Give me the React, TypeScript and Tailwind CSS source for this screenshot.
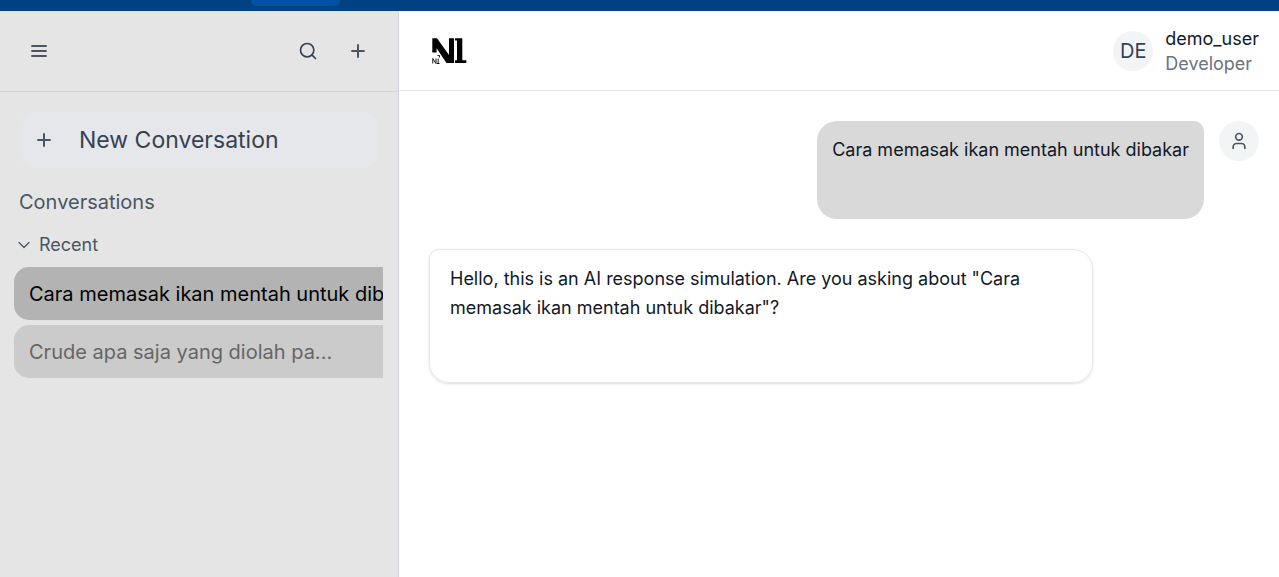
import React from 'react';
import { ChevronDown, Search, User } from 'lucide-react';

function LineIcon({ d }: { d: string }) {
  return (
    <svg viewBox="0 0 20 20" className="size-5" fill="none" stroke="currentColor" strokeWidth={2} aria-hidden="true">
      <path d={d} />
    </svg>
  );
}

const menuPath = 'M2.300 5h15.400M2.300 10h15.400M2.300 15h15.400';
const plusPath = 'M3.300 10h13.400M10 3.300v13.400';

function Logo() {
  return (
    <svg viewBox="0 0 40 34" className="h-[34px] w-10" role="img" aria-label="NI">
      <path fill="#000" d="M2.300 4.200H7L19 21V4.200h5V29h-7.500L6.600 14.200V18.500H2.300z" />
      <path fill="#000" d="M25 4.200h7.300v22h4V29H25v-2.800h2V6.500h-2z" />
      <path fill="none" stroke="#000" strokeWidth="0.900" d="M2.800 29.500v-5l3.200 5v-5M6.800 29.500h2.800M8.200 29.500v-5M7.500 21.500h2v2" />
    </svg>
  );
}

const conversations = [
  { title: 'Cara memasak ikan mentah untuk dibakar', active: true },
  { title: 'Crude apa saja yang diolah pa...', active: false },
];

function Sidebar() {
  return (
    <aside className="flex w-[399px] shrink-0 flex-col border-r border-[#d1d5db] bg-[#e5e5e5] text-[#374151]">
      <div className="flex h-[81px] items-center justify-between border-b border-[#d1d5db] pr-5 pl-[19px]">
        <button aria-label="Toggle menu" className="flex size-10 items-center justify-center text-[#4b5563]">
          <LineIcon d={menuPath} />
        </button>
        <div className="flex gap-[10px]">
          <button aria-label="Search" className="flex size-10 items-center justify-center">
            <Search size={20} />
          </button>
          <button aria-label="Add conversation" className="flex size-10 items-center justify-center text-[#4b5563]">
            <LineIcon d={plusPath} />
          </button>
        </div>
      </div>
      <div className="px-5 pt-5">
        <button className="flex h-14 w-full items-center gap-[25px] rounded-[15px] bg-[#e5e7eb] pl-[14px] text-[23px]">
          <span className="text-[#4b5563]">
            <LineIcon d={plusPath} />
          </span>
          New Conversation
        </button>
      </div>
      <h2 className="mt-[18px] px-[19px] text-[20px] leading-8 text-[#4b5563]">Conversations</h2>
      <button className="mt-[13px] flex items-center gap-[5px] px-[14px] text-left text-[18px] leading-7 text-[#4b5563]">
        <ChevronDown size={20} strokeWidth={1.5} />
        Recent
      </button>
      <ul className="mt-2 mr-[15px] ml-[14px] flex flex-col gap-[5px]">
        {conversations.map((item) => (
          <li key={item.title}>
            <button
              className={
                item.active
                  ? 'block h-[53px] w-full overflow-hidden rounded-l-[15px] bg-[#b3b3b3] pl-[15px] text-left text-[20px] whitespace-nowrap text-black'
                  : 'block h-[53px] w-full overflow-hidden rounded-l-[15px] bg-[#cbcbcb] pl-[15px] text-left text-[20px] whitespace-nowrap text-[#666666]'
              }
            >
              {item.title}
            </button>
          </li>
        ))}
      </ul>
    </aside>
  );
}

export default function App() {
  return (
    <div className="flex min-h-screen flex-col bg-white font-['Inter',sans-serif] text-[#111827]">
      <div className="flex h-[11px] bg-[#004182] pl-[251px]">
        <div className="h-[6px] w-[89px] rounded-b-[5px] bg-[#0052a5]" />
      </div>
      <div className="flex flex-1">
        <Sidebar />
        <main className="flex min-w-0 flex-1 flex-col">
          <header className="flex h-20 items-center justify-between border-b border-[#e5e7eb] pr-5 pl-[31px]">
            <Logo />
            <div className="flex items-center gap-3">
              <div className="flex size-10 items-center justify-center rounded-full bg-[#f3f4f6] text-[20px] text-[#374151]">DE</div>
              <div className="text-[18px] leading-[25px]">
                <p>demo_user</p>
                <p className="text-[#6b7280]">Developer</p>
              </div>
            </div>
          </header>
          <section aria-label="Messages" className="flex flex-col gap-[30px] pt-[30px] pr-5 pl-[30px] text-[18px] leading-[29px]">
            <div className="flex justify-end gap-[15px]">
              <div className="min-h-[98px] rounded-[20px] rounded-tr-[10px] bg-[#d9d9d9] px-[15px] py-[14px]">
                <p>Cara memasak ikan mentah untuk dibakar</p>
              </div>
              <div className="flex size-10 items-center justify-center rounded-full bg-[#f3f4f6] text-[#4b5563]">
                <User size={20} />
              </div>
            </div>
            <div className="min-h-[134px] w-4/5 rounded-[20px] rounded-tl-[10px] border border-[#e5e7eb] px-5 py-[14px] shadow-sm">
              <p>Hello, this is an AI response simulation. Are you asking about "Cara memasak ikan mentah untuk dibakar"?</p>
            </div>
          </section>
        </main>
      </div>
    </div>
  );
}
